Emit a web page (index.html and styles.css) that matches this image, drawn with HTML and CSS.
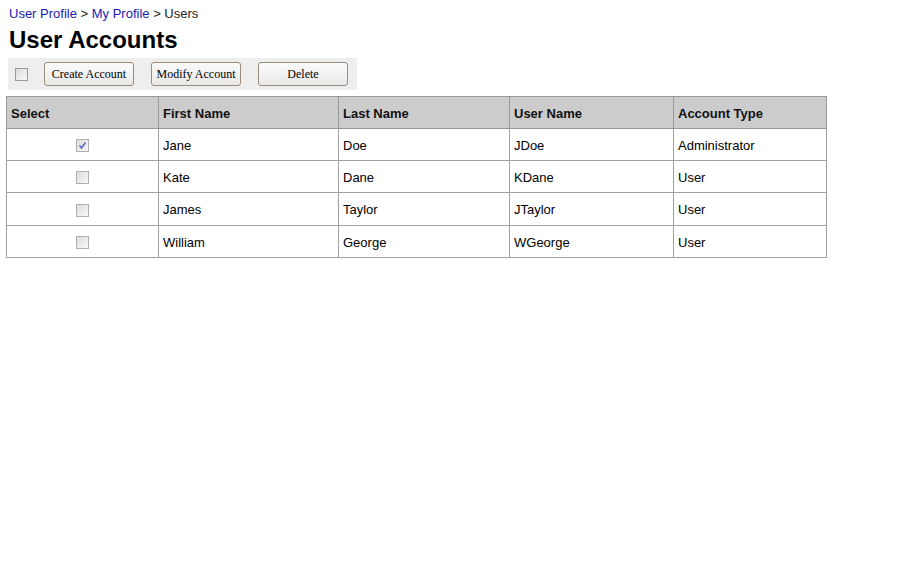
FILE: index.html
```html
<!DOCTYPE html>
<html>
<head>
<meta charset="utf-8">
<link rel="stylesheet" href="styles.css">
</head>
<body>
<div class="crumbs"><a href="#">User Profile</a> &gt; <a href="#">My Profile</a> &gt; Users</div>
<h1 class="title">User Accounts</h1>
<div class="toolbar">
  <span class="cb"></span>
  <button class="btn">Create Account</button>
  <button class="btn">Modify Account</button>
  <button class="btn btn-del">Delete</button>
</div>
<table class="grid">
  <colgroup>
    <col class="c1"><col class="c2"><col class="c3"><col class="c4"><col class="c5">
  </colgroup>
  <thead>
    <tr><th>Select</th><th>First Name</th><th>Last Name</th><th>User Name</th><th>Account Type</th></tr>
  </thead>
  <tbody>
    <tr><td class="sel"><span class="cb checked"><svg width="9" height="9" viewBox="0 0 9 9"><path d="M1.5 4.5 L3.5 7 L7.5 1.5" fill="none" stroke="#5b68b5" stroke-width="1.6"/></svg></span></td><td>Jane</td><td>Doe</td><td>JDoe</td><td>Administrator</td></tr>
    <tr><td class="sel"><span class="cb"></span></td><td>Kate</td><td>Dane</td><td>KDane</td><td>User</td></tr>
    <tr class="tall"><td class="sel"><span class="cb"></span></td><td>James</td><td>Taylor</td><td>JTaylor</td><td>User</td></tr>
    <tr><td class="sel"><span class="cb"></span></td><td>William</td><td>George</td><td>WGeorge</td><td>User</td></tr>
  </tbody>
</table>
</body>
</html>
```
FILE: styles.css
```css
html, body {
  margin: 0;
  padding: 0;
  background: #fff;
  font-family: "Liberation Sans", Arial, sans-serif;
  color: #000;
}
body {
  padding: 6px 0 0 0;
}
.crumbs {
  font-size: 13px;
  line-height: 16px;
  padding-left: 9px;
  color: #222;
}
.crumbs a {
  color: #1a1ab0;
  text-decoration: none;
}
.title {
  margin: 3px 0 0 9px;
  font-size: 24px;
  line-height: 30px;
  font-weight: bold;
}
.toolbar {
  margin: 3px 0 0 8px;
  width: 349px;
  height: 32px;
  background: #eeeeee;
  display: flex;
  align-items: center;
  box-sizing: border-box;
  padding-left: 7px;
}
.cb {
  display: inline-flex;
  align-items: center;
  justify-content: center;
  width: 11px;
  height: 11px;
  border: 1px solid #9a9a9a;
  background: linear-gradient(135deg, #dcdcdc, #f8f8f8);
  box-sizing: content-box;
}
.toolbar .cb {
  margin-right: 16px;
}
.btn {
  font-family: "Liberation Serif", "Times New Roman", serif;
  font-size: 12px;
  height: 24px;
  width: 90px;
  padding: 0;
  margin-right: 17px;
  border: 1px solid #9c8c7c;
  border-radius: 3px;
  background: linear-gradient(#fbfbfb, #e8e8e8);
  color: #000;
}
.btn-del {
  margin-right: 0;
}
.grid {
  margin: 6px 0 0 6px;
  border-collapse: collapse;
  table-layout: fixed;
  width: 820px;
  font-size: 13px;
}
.c1 { width: 152px; }
.c2 { width: 180px; }
.c3 { width: 171px; }
.c4 { width: 164px; }
.c5 { width: 153px; }
.grid th, .grid td {
  border: 1px solid #a0a0a0;
  height: 32px;
  padding: 1px 0 0 4px;
  text-align: left;
  box-sizing: border-box;
}
.grid tr.tall td {
  height: 33px;
}
.grid th {
  background: #cccccc;
  font-weight: bold;
  color: #111;
  border-color: #999;
}
.grid td.sel {
  text-align: center;
  padding: 0;
}
.grid td.sel .cb {
  vertical-align: middle;
  border-color: #b0b0b0;
}
.cb.checked svg {
  display: block;
}
```
